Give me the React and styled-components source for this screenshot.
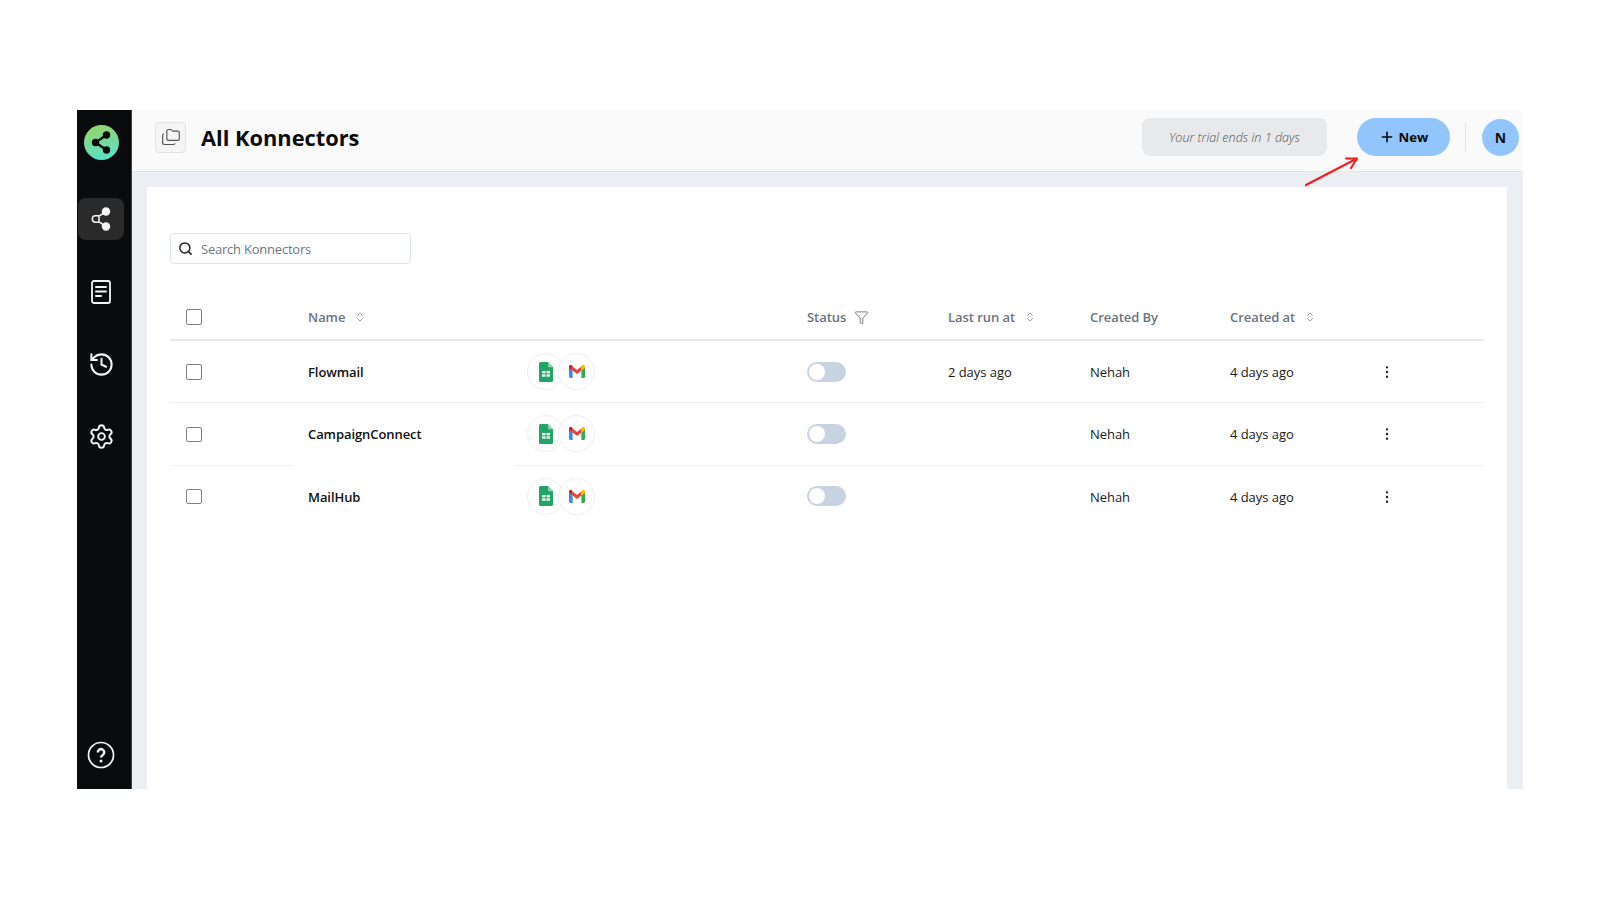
import React from 'react';
import styled, { createGlobalStyle } from 'styled-components';
import {
  ChevronsUpDown,
  Folders,
  Funnel,
  History,
  MoreVertical,
  Plus,
  Search,
  Settings,
} from 'lucide-react';

const GlobalStyle = createGlobalStyle`
  html, body {
    margin: 0;
    background: #fff;
  }
  body {
    font-family: 'Open Sans', 'Noto Sans', sans-serif;
    color: #111;
  }
  * {
    box-sizing: border-box;
  }
`;

const Page = styled.div`
  width: 1600px;
  height: 900px;
  padding: 110px 77px;
`;

const Frame = styled.div`
  display: flex;
  height: 679px;
  background: #ebeef2;
`;

const Sidebar = styled.nav`
  width: 55px;
  flex-shrink: 0;
  background: #0a0b0c;
  border-right: 1px solid #3c4043;
  display: flex;
  flex-direction: column;
  align-items: center;
  padding: 15px 7px 13px 1px;
`;

const Logo = styled.svg`
  width: 35px;
  height: 35px;
  margin-bottom: 38px;
`;

const NavItem = styled.div`
  width: 46px;
  height: 42px;
  margin-bottom: 30.5px;
  border-radius: 8px;
  background: ${(p) => (p.$active ? '#2a2a2b' : 'transparent')};
  color: #f4f4f4;
  display: flex;
  align-items: center;
  justify-content: center;
`;

const HelpItem = styled(NavItem)`
  margin-top: auto;
  margin-bottom: 0;
`;

const Main = styled.div`
  flex: 1;
  min-width: 0;
  display: flex;
  flex-direction: column;
`;

const Header = styled.header`
  height: 62px;
  flex-shrink: 0;
  background: #fafafa;
  border-bottom: 1px solid #e6e8ea;
  display: flex;
  align-items: center;
  padding: 0 4px 7px 23px;
`;

const FolderButton = styled.div`
  width: 31px;
  height: 31px;
  border: 1px solid #e2e3e5;
  border-radius: 4px;
  background: #f5f5f5;
  color: #555;
  display: flex;
  align-items: center;
  justify-content: center;
  margin-right: 15px;
`;

const Title = styled.h1`
  margin: 0;
  font-size: 21.8px;
  font-weight: 700;
  color: #0b0b0b;
  flex: 1;
`;

const TrialBadge = styled.div`
  width: 185px;
  height: 38px;
  border-radius: 8px;
  background: #e8e9eb;
  color: #555;
  font-size: 12.6px;
  font-style: italic;
  font-weight: 300;
  display: flex;
  align-items: center;
  justify-content: center;
  margin-right: 30px;
`;

const NewButton = styled.div`
  width: 93px;
  height: 38px;
  border-radius: 19px;
  background: #93c5fd;
  color: #0a0a0a;
  font-size: 13.2px;
  font-weight: 700;
  display: flex;
  align-items: center;
  justify-content: center;
  gap: 4px;
`;

const Divider = styled.div`
  width: 1px;
  height: 28px;
  background: #e3e4e6;
  margin: 0 16px 0 15px;
`;

const Avatar = styled.div`
  width: 37px;
  height: 37px;
  border-radius: 50%;
  background: #93c5fd;
  font-size: 14px;
  font-weight: 700;
  display: flex;
  align-items: center;
  justify-content: center;
`;

const Arrow = styled.svg`
  position: absolute;
  left: 1304px;
  top: 155px;
  width: 56px;
  height: 32px;
`;

const Body = styled.div`
  flex: 1;
  min-height: 0;
  padding: 15px 16px 0 15px;
`;

const Card = styled.section`
  height: 100%;
  background: #fff;
  padding: 46px 23px 0;
`;

const SearchBox = styled.div`
  width: 241px;
  height: 31px;
  border: 1px solid #dfe3ea;
  border-radius: 4px;
  display: flex;
  align-items: center;
  gap: 8px;
  padding: 0 7px;
  color: #222;
  margin-bottom: 30px;
`;

const SearchText = styled.span`
  font-size: 13px;
  letter-spacing: -0.22px;
  color: #6f7681;
`;

const Row = styled.div`
  display: grid;
  grid-template-columns: 123px 222px 277px 141px 142px 140px 157px 1fr;
  height: ${(p) => (p.$head ? '47px' : '62.3px')};
`;

const Cell = styled.div`
  display: flex;
  align-items: center;
  padding-left: ${(p) => p.$pad || '15px'};
  gap: ${(p) => p.$gap || '9px'};
  font-size: 13px;
  letter-spacing: -0.05px;
  border-bottom: ${(p) => (p.$bare ? '1px solid transparent' : p.$head ? '2px solid #e8eaee' : '1px solid #eceef1')};
  color: ${(p) => (p.$head ? '#6b7280' : '#1a1a1a')};
  font-weight: ${(p) => (p.$head ? 600 : 400)};
  padding-top: 1px;
`;

const NameText = styled.span`
  font-weight: 560;
  letter-spacing: -0.08px;
  color: #111;
`;

const CheckBox = styled.div`
  width: 15.5px;
  height: 15.5px;
  border: 1.5px solid #808080;
  border-radius: 2px;
  background: #fff;
`;

const IconStack = styled.div`
  display: flex;
  margin-top: -1px;
`;

const IconCircle = styled.div`
  width: 37px;
  height: 37px;
  border-radius: 50%;
  border: 1px solid #eeeeee;
  background: #fff;
  display: flex;
  align-items: center;
  justify-content: center;
  margin-left: ${(p) => (p.$overlap ? '-6px' : '0')};
`;

const Toggle = styled.div`
  width: 39px;
  height: 20px;
  border-radius: 10px;
  background: #c8d3e1;
  padding: 2px;
  display: flex;
  margin-top: -1px;
`;

const Knob = styled.div`
  width: 16px;
  height: 16px;
  border-radius: 50%;
  background: #fff;
`;

const SheetsIcon = () => (
  <svg width="14" height="20" viewBox="0 0 14 19" preserveAspectRatio="none">
    <path d="M1.5 0H9l5 5v12.5a1.5 1.5 0 0 1-1.5 1.5h-11A1.5 1.5 0 0 1 0 17.5v-16A1.5 1.5 0 0 1 1.5 0z" fill="#23a566" />
    <path d="M9 0l5 5H10a1 1 0 0 1-1-1z" fill="#8ed1b1" />
    <path d="M3 8.5h8v5.5H3z" fill="#e8f5ee" />
    <path d="M3 11.2h8M7 8.5V14" stroke="#23a566" strokeWidth="0.9" />
  </svg>
);

const GmailIcon = () => (
  <svg width="16" height="13" viewBox="0 0 16 13">
    <path d="M0 2.2V11.6C0 12.4.6 13 1.4 13H3.6V5.6z" fill="#4285f4" />
    <path d="M12.4 13h2.2c.8 0 1.4-.6 1.4-1.4V2.2L12.4 5.6z" fill="#34a853" />
    <path d="M12.4 1.6V5.6L16 2.8V1.6C16 .2 14.4-.6 13.3.3z" fill="#fbbc04" />
    <path d="M3.6 5.6V1.6L8 5l4.4-3.4v4L8 9z" fill="#ea4335" />
    <path d="M0 1.6v1.2l3.6 2.8V1.6L2.7.3C1.6-.6 0 .2 0 1.6z" fill="#c5221f" />
  </svg>
);

const ShareNavIcon = () => (
  <svg width="22" height="28" viewBox="0 0 22 28" fill="none" stroke="#f4f4f4" strokeWidth="1.5">
    <path d="M14.5 7.5L9.5 10.8M9.5 17.2L14.5 20.5" />
    <path d="M9 10.8H5.5a3.2 3.2 0 0 0 0 6.4H9z" />
    <circle cx="16" cy="6.5" r="4.2" fill="#f4f4f4" stroke="none" />
    <circle cx="16" cy="21.5" r="4.2" fill="#f4f4f4" stroke="none" />
  </svg>
);

const DocIcon = () => (
  <svg width="22" height="24" viewBox="0 0 22 24" fill="none" stroke="#f4f4f4" strokeWidth="1.8" strokeLinecap="round">
    <rect x="2" y="1" width="18" height="22" rx="2" />
    <path d="M6 7h10M6 11.5h10M6 16h5" strokeWidth="2" />
  </svg>
);

const HelpIcon = () => (
  <svg width="28" height="28" viewBox="0 0 28 28" fill="none">
    <circle cx="14" cy="14" r="12.5" stroke="#f4f4f4" strokeWidth="1.7" />
    <path d="M10.8 11.4a3.2 3.2 0 1 1 5 2.6c-1.2.8-1.8 1.2-1.8 2.6" stroke="#f4f4f4" strokeWidth="2.5" />
    <circle cx="14" cy="20" r="1.5" fill="#f4f4f4" />
  </svg>
);

const rows = [
  { name: 'Flowmail', lastRun: '2 days ago' },
  { name: 'CampaignConnect', lastRun: '', gap: true },
  { name: 'MailHub', lastRun: '', last: true },
];

const SortIcon = () => <ChevronsUpDown size={12} color="#777" strokeWidth={1.4} />;

const App = () => {
  return (
    <Page>
      <GlobalStyle />
      <Frame>
        <Sidebar>
          <Logo viewBox="0 0 35 35">
            <defs>
              <linearGradient id="logoFill" x1="0.35" y1="0" x2="0.6" y2="1">
                <stop offset="0" stopColor="#98d36a" />
                <stop offset="1" stopColor="#55e2cc" />
              </linearGradient>
            </defs>
            <circle cx="17.5" cy="17.5" r="17.5" fill="url(#logoFill)" />
            <path d="M22.5 10L11.5 17.5L22.5 25" stroke="#0a0b0c" strokeWidth="2.4" fill="none" />
            <circle cx="22.5" cy="10" r="3.7" fill="#0a0b0c" />
            <circle cx="11.5" cy="17.5" r="3.7" fill="#0a0b0c" />
            <circle cx="22.5" cy="25" r="3.7" fill="#0a0b0c" />
          </Logo>
          <NavItem $active><ShareNavIcon /></NavItem>
          <NavItem><DocIcon /></NavItem>
          <NavItem><History size={27} strokeWidth={1.8} /></NavItem>
          <NavItem><Settings size={27} strokeWidth={1.7} /></NavItem>
          <HelpItem><HelpIcon /></HelpItem>
        </Sidebar>
        <Main>
          <Header>
            <FolderButton><Folders size={20} strokeWidth={1.4} /></FolderButton>
            <Title>All Konnectors</Title>
            <TrialBadge>Your trial ends in 1 days</TrialBadge>
            <NewButton><Plus size={16} strokeWidth={2.4} />New</NewButton>
            <Divider />
            <Avatar>N</Avatar>
          </Header>
          <Body>
            <Card>
              <SearchBox>
                <Search size={15} strokeWidth={2.4} />
                <SearchText>Search Konnectors</SearchText>
              </SearchBox>
              <Row $head>
                <Cell $head $pad="16px"><CheckBox /></Cell>
                <Cell $head>Name<SortIcon /></Cell>
                <Cell $head />
                <Cell $head $gap="8px">Status<Funnel size={15} color="#555" strokeWidth={1.2} /></Cell>
                <Cell $head>Last run at<SortIcon /></Cell>
                <Cell $head>Created By</Cell>
                <Cell $head>Created at<SortIcon /></Cell>
                <Cell $head />
              </Row>
              {rows.map((row) => (
                <Row key={row.name}>
                  <Cell $pad="16px" $bare={row.last}><CheckBox /></Cell>
                  <Cell $bare={row.gap || row.last}><NameText>{row.name}</NameText></Cell>
                  <Cell $pad="12px" $bare={row.last}>
                    <IconStack>
                      <IconCircle><SheetsIcon /></IconCircle>
                      <IconCircle $overlap><GmailIcon /></IconCircle>
                    </IconStack>
                  </Cell>
                  <Cell $bare={row.last}><Toggle><Knob /></Toggle></Cell>
                  <Cell $bare={row.last}>{row.lastRun}</Cell>
                  <Cell $bare={row.last}>Nehah</Cell>
                  <Cell $bare={row.last}>4 days ago</Cell>
                  <Cell $bare={row.last} $pad="7px"><MoreVertical size={16} color="#222" strokeWidth={1.6} /></Cell>
                </Row>
              ))}
            </Card>
          </Body>
        </Main>
      </Frame>
      <Arrow viewBox="0 0 56 32" fill="none">
        <path d="M2 30L52 4" stroke="#f02020" strokeWidth="2.2" strokeLinecap="round" />
        <path d="M42 3.5L53 3.5L47 13" stroke="#f02020" strokeWidth="2.2" strokeLinecap="round" strokeLinejoin="round" />
      </Arrow>
    </Page>
  );
};

export default App;
